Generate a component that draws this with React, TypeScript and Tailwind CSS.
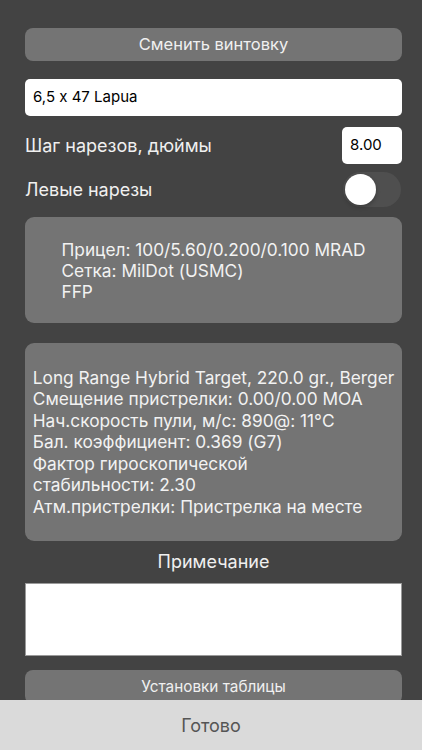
import React from "react";

const font = { fontFamily: "Inter, 'Noto Sans', sans-serif" };

const scopeLines = [
  "Прицел: 100/5.60/0.200/0.100 MRAD",
  "Сетка: MilDot (USMC)",
  "FFP",
];

const bulletLines = [
  "Long Range Hybrid Target, 220.0 gr., Berger",
  "Смещение пристрелки: 0.00/0.00 MOA",
  "Нач.скорость пули, м/с: 890@: 11°C",
  "Бал. коэффициент: 0.369 (G7)",
  "Фактор гироскопической",
  "стабильности: 2.30",
  "Атм.пристрелки: Пристрелка на месте",
];

function InfoBox({ lines, height, leading }: { lines: string[]; height: string; leading: string }) {
  return (
    <div className={`${height} rounded-[9px] bg-[#747474] flex items-center justify-center`}>
      <div className={`text-[17.3px] ${leading} text-[#f2f2f2]`}>
        {lines.map((l) => (
          <div key={l}>{l}</div>
        ))}
      </div>
    </div>
  );
}

export default function App() {
  return (
    <div
      className="relative w-[422px] h-[750px] overflow-hidden bg-[#434343] [font-feature-settings:'calt'_0]"
      style={font}
    >
      <div className="flex flex-col pl-[25px] pr-[20px] pt-[28px]">
        {/* Change rifle */}
        <button className="h-[33px] rounded-[8px] bg-[#747474] text-[16.5px] text-[#f0f0f0]">
          Сменить винтовку
        </button>

        {/* Cartridge name */}
        <div className="mt-[18px] h-[37px] rounded-[5px] bg-white flex items-center px-[8px] text-[15px] text-black">
          6,5 x 47 Lapua
        </div>

        {/* Twist rate */}
        <div className="mt-[11px] h-[37px] flex items-center justify-between">
          <span className="text-[18px] text-[#f0f0f0]">Шаг нарезов, дюймы</span>
          <div className="w-[60px] h-[37px] rounded-[5px] bg-white flex items-center px-[8px] text-[15px] text-black">
            8.00
          </div>
        </div>

        {/* Left twist */}
        <div className="mt-[8px] h-[35px] flex items-center justify-between">
          <span className="text-[18px] text-[#f0f0f0]">Левые нарезы</span>
          <div className="w-[58px] h-[35px] mr-[1px] rounded-full bg-[#4f4f4f] flex items-center px-[2px]">
            <div className="w-[31px] h-[31px] rounded-full bg-white shadow-[0_2px_4px_rgba(0,0,0,0.25)]" />
          </div>
        </div>

        <div className="mt-[10px]">
          <InfoBox lines={scopeLines} height="h-[106px]" leading="leading-[21px]" />
        </div>

        <div className="mt-[20px]">
          <InfoBox lines={bulletLines} height="h-[198px]" leading="leading-[21.5px]" />
        </div>

        <div className="mt-[10px] text-center text-[18px] text-[#f0f0f0] leading-[22px]">Примечание</div>

        {/* Notes */}
        <div className="mt-[10px] h-[73px] bg-white border border-[#9a9a9a]" />

        <button className="mt-[14px] h-[34px] rounded-[8px] bg-[#747474] text-[15.3px] text-[#f0f0f0]">
          Установки таблицы
        </button>
      </div>

      {/* Bottom bar */}
      <div className="absolute left-0 right-0 bottom-0 h-[50px] bg-[#dadada] flex items-center justify-center">
        <span className="text-[18px] text-[#555555]">Готово</span>
      </div>
    </div>
  );
}
